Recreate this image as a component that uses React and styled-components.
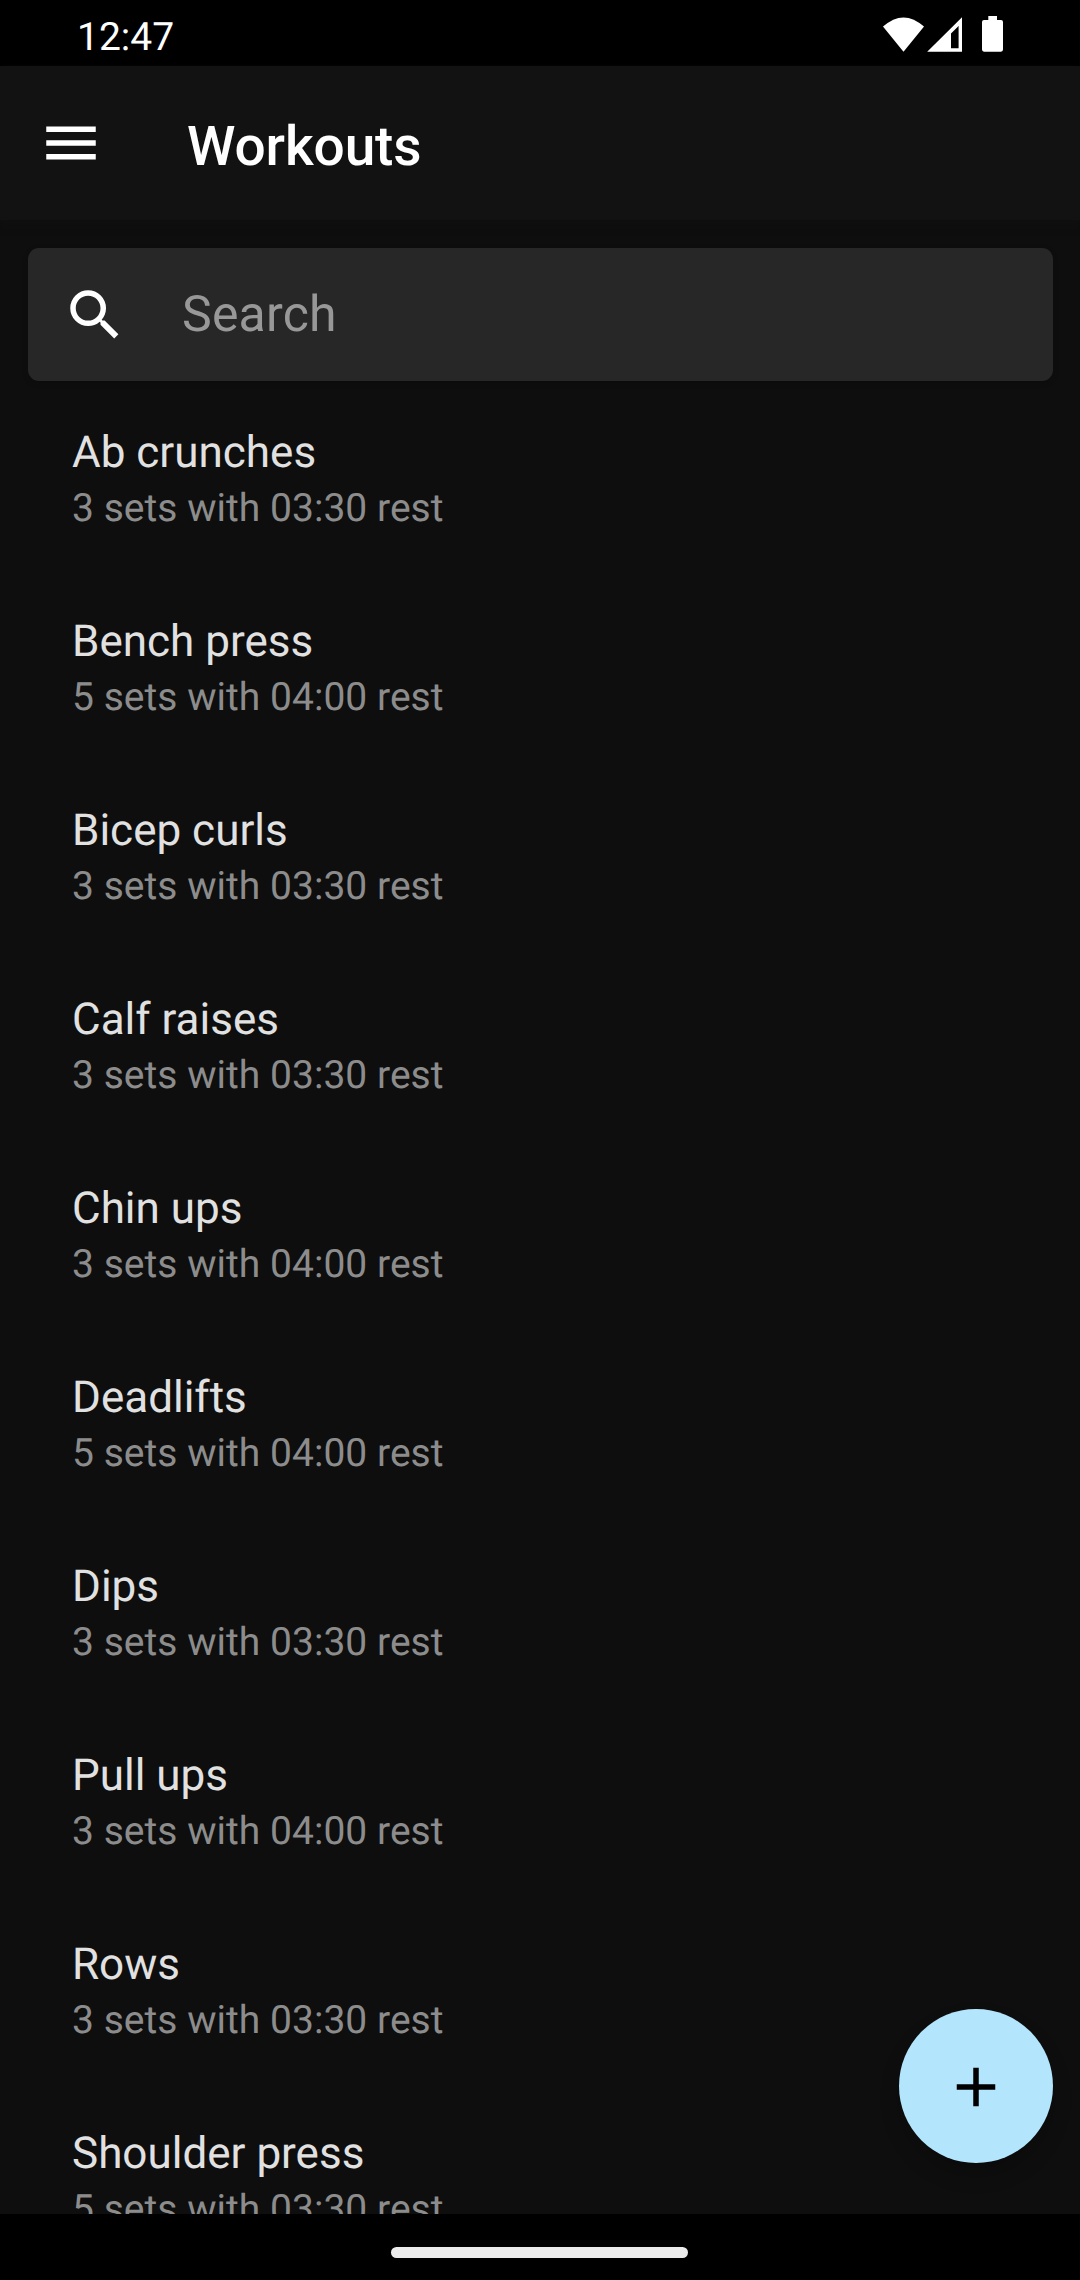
import React from "react";
import styled, { createGlobalStyle } from "styled-components";

const GlobalStyle = createGlobalStyle`
  * { box-sizing: border-box; }
  html, body { margin: 0; padding: 0; background: #000; }
  body {
    font-family: Roboto, "Noto Sans", sans-serif;
    -webkit-font-smoothing: antialiased;
    text-rendering: geometricPrecision;
  }
`;

const Screen = styled.div`
  position: relative;
  display: flex;
  flex-direction: column;
  width: 1080px;
  height: 2280px;
  overflow: hidden;
  background: #0e0e0e;
`;

const StatusBar = styled.header`
  flex: none;
  display: flex;
  justify-content: space-between;
  height: 66px;
  padding: 0 76px 0 77px;
  background: #000;
  color: #fff;
`;

const Clock = styled.span`
  padding-top: 14px;
  font-size: 39px;
  line-height: 46px;
`;

const StatusIcons = styled.svg`
  display: block;
  width: 122px;
  height: 66px;
`;

const Toolbar = styled.div`
  flex: none;
  display: flex;
  align-items: center;
  height: 154px;
  padding-left: 38px;
  background: #121212;
  box-shadow: 0 4px 8px #101010;
`;

const IconButton = styled.button`
  display: flex;
  flex: none;
  padding: 0;
  border: 0;
  background: none;
  color: inherit;
`;

const Glyph = styled.svg`
  display: block;
  width: 66px;
  height: 66px;
  fill: ${(p) => p.$color || "#fff"};
`;

const Title = styled.h1`
  margin: 8px 0 0 83px;
  color: #fff;
  font-size: 55px;
  font-weight: 500;
  line-height: 64px;
  letter-spacing: -0.1px;
`;

const Content = styled.main`
  flex: 1;
  min-height: 0;
  display: flex;
  flex-direction: column;
  padding: 28px 27px 0 28px;
  overflow: hidden;
`;

const SearchBar = styled.div`
  flex: none;
  display: flex;
  align-items: center;
  height: 133px;
  padding-left: 34px;
  border-radius: 11px;
  background: #272727;
  box-shadow: 0 2px 6px rgba(0, 0, 0, 0.15);
`;

const Placeholder = styled.span`
  margin: 2px 0 0 54px;
  color: #989898;
  font-size: 50px;
  line-height: 59px;
  letter-spacing: 0.2px;
`;

const List = styled.ul`
  flex: none;
  margin: 0;
  padding: 45px 0 0 44px;
  list-style: none;
`;

const Row = styled.li`
  height: 189px;
`;

const Name = styled.div`
  color: #e1e1e1;
  font-size: 44px;
  line-height: 52px;
`;

const Detail = styled.div`
  padding-top: 7px;
  color: #8c8c8c;
  font-size: 39px;
  line-height: 46px;
  letter-spacing: 0.03px;
`;

const NavigationBar = styled.footer`
  flex: none;
  display: flex;
  justify-content: center;
  height: 66px;
  padding: 33px 1px 0 0;
  background: #000;
`;

const HomeHandle = styled.div`
  width: 297px;
  height: 11px;
  border-radius: 5.5px;
  background: #ececec;
`;

const AddButton = styled.button`
  position: absolute;
  right: 27px;
  bottom: 117px;
  display: flex;
  align-items: center;
  justify-content: center;
  width: 154px;
  height: 154px;
  padding: 1px 0 0;
  border: 0;
  border-radius: 50%;
  background: #b3e5fc;
  box-shadow: 0 12px 20px rgba(0, 0, 0, 0.2);
`;

const workouts = [
  ["Ab crunches", 3, "03:30"],
  ["Bench press", 5, "04:00"],
  ["Bicep curls", 3, "03:30"],
  ["Calf raises", 3, "03:30"],
  ["Chin ups", 3, "04:00"],
  ["Deadlifts", 5, "04:00"],
  ["Dips", 3, "03:30"],
  ["Pull ups", 3, "04:00"],
  ["Rows", 3, "03:30"],
  ["Shoulder press", 5, "03:30"],
];

export default function App() {
  return (
    <Screen>
      <GlobalStyle />
      <StatusBar>
        <Clock>12:47</Clock>
        <StatusIcons viewBox="882 0 122 66" fill="#fff">
          <path d="M883 26.6Q903.5 8.2 924 26.6L903.5 51.7Z" />
          <path fillRule="evenodd" d="M962 17.3V51.8H927.2ZM958.6 25.9L951 33.5V48.3H958.6Z" />
          <path d="M988.3 16H997V20H1001Q1003 20 1003 22V49.6Q1003 51.7 1001 51.7H984Q982 51.7 982 49.6V22Q982 20 984 20H988.3Z" />
        </StatusIcons>
      </StatusBar>
      <Toolbar>
        <IconButton aria-label="Menu">
          <Glyph viewBox="0 0 24 24">
            <path d="M3 6h18v2H3V6m0 5h18v2H3v-2m0 5h18v2H3v-2Z" />
          </Glyph>
        </IconButton>
        <Title>Workouts</Title>
      </Toolbar>
      <Content>
        <SearchBar>
          <Glyph viewBox="0 0 24 24">
            <path d="M9.5 3A6.5 6.5 0 0 1 16 9.5c0 1.61-.59 3.09-1.56 4.23l.27.27h.79l5 5-1.5 1.5-5-5v-.79l-.27-.27A6.516 6.516 0 0 1 9.5 16 6.5 6.5 0 0 1 3 9.5 6.5 6.5 0 0 1 9.5 3m0 2C7 5 5 7 5 9.5S7 14 9.5 14 14 12 14 9.5 12 5 9.5 5Z" />
          </Glyph>
          <Placeholder>Search</Placeholder>
        </SearchBar>
        <List>
          {workouts.map(([name, sets, rest]) => (
            <Row key={name}>
              <Name>{name}</Name>
              <Detail>{`${sets} sets with ${rest} rest`}</Detail>
            </Row>
          ))}
        </List>
      </Content>
      <NavigationBar>
        <HomeHandle />
      </NavigationBar>
      <AddButton aria-label="Add workout">
        <Glyph viewBox="0 0 24 24" $color="#000">
          <path d="M19 13h-6v6h-2v-6H5v-2h6V5h2v6h6v2Z" />
        </Glyph>
      </AddButton>
    </Screen>
  );
}
